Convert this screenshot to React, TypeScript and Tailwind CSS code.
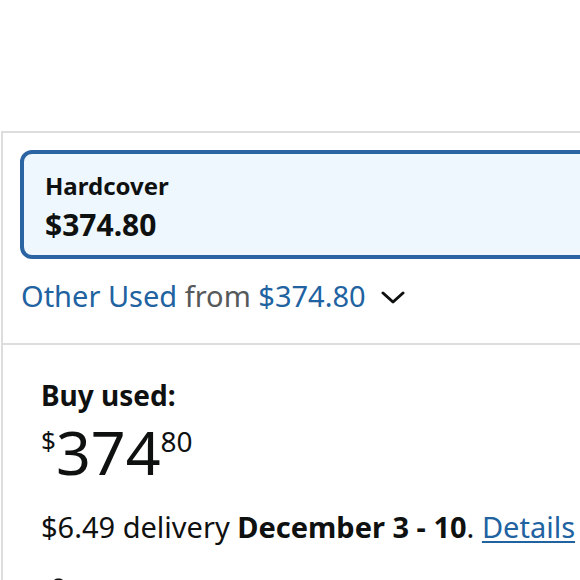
import React from "react";

export default function App() {
  return (
    <div className="h-[580px] w-[580px] overflow-hidden bg-white font-['Noto_Sans',sans-serif] text-[#0f1111]">
      <div className="h-[131px]" />
      <div className="ml-[1px] w-[640px] border-l-2 border-t-2 border-[#dddddd]">
        {/* format selector */}
        <div className="px-[17px] pt-[17px]">
          <div className="rounded-[12px] border-4 border-[#2a64a3] bg-[#edf7fd] px-[21px] pb-[11px] pt-[17px]">
            <div className="text-[24px] font-bold leading-[30px]">Hardcover</div>
            <div className="mt-[5px] text-[30px] font-bold leading-[38px]">$374.80</div>
          </div>
        </div>
        <div className="flex items-center gap-[15px] px-[18px] pb-[29px] pt-[19px] text-[29px] leading-[36px]">
          <span>
            <span className="text-[#2162a1]">Other Used</span>{" "}
            <span className="text-[#565959]">from</span>{" "}
            <span className="text-[#2162a1]">$374.80</span>
          </span>
          <svg width="24" height="15" viewBox="0 0 24 15" className="mt-[3px]">
            <path d="M2 3 L12 12 L22 3" fill="none" stroke="#0f1111" strokeWidth="3" strokeLinecap="round" strokeLinejoin="round" />
          </svg>
        </div>
        <div className="border-t-2 border-[#dddddd]" />
        {/* buy box */}
        <div className="px-[38px] pt-[33px]">
          <div className="text-[28px] font-bold leading-[34px]">Buy used:</div>
          <div className="mt-[9px] flex items-start leading-none">
            <span className="mt-[6px] text-[26px]">$</span>
            <span className="text-[61px] leading-[61px]">374</span>
            <span className="mt-[6px] text-[28px]">80</span>
          </div>
          <div className="mt-[27px] text-[29px] leading-[36px]">
            $6.49 delivery <span className="font-bold">December 3 - 10</span>.{" "}
            <span className="text-[#2162a1] underline underline-offset-[3px]">Details</span>
          </div>
          <div className="mt-[32px] flex items-start pl-[9px]">
            <svg width="17" height="24" viewBox="0 0 18 24">
              <path d="M9 1 C4.5 1 1 4.5 1 9 C1 15 9 23 9 23 C9 23 17 15 17 9 C17 4.5 13.5 1 9 1 Z" fill="#0f1111" />
              <circle cx="9" cy="9" r="3" fill="#fff" />
            </svg>
          </div>
        </div>
      </div>
    </div>
  );
}
